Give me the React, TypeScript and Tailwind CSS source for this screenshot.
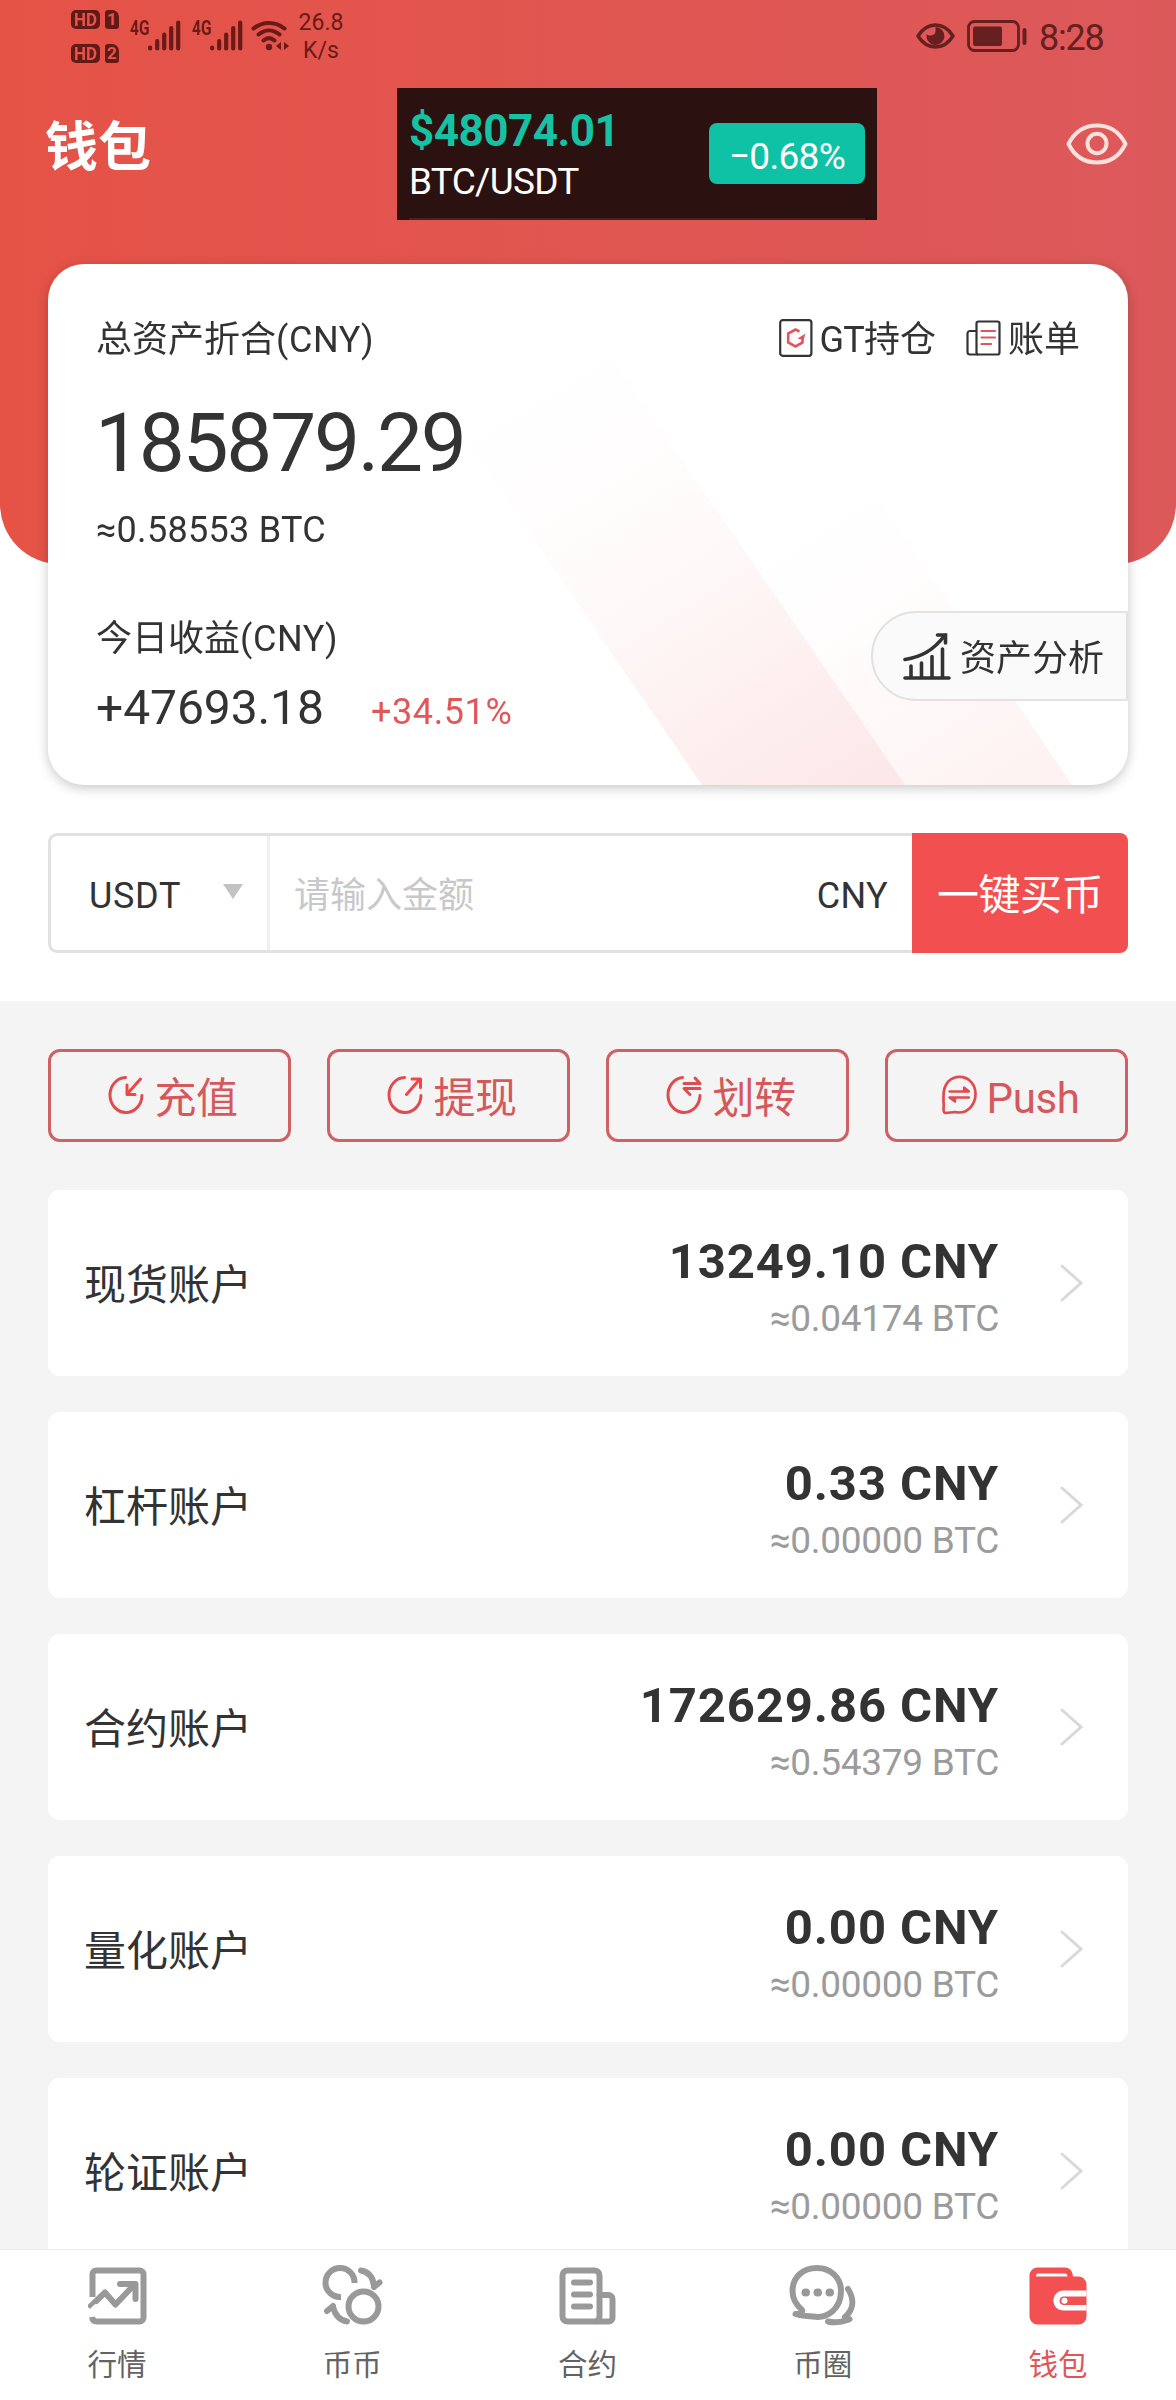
import type { ReactNode } from 'react';

type Account = { name: string; amount: string; btc: string };

const ACCOUNTS: Account[] = [
  { name: '现货账户', amount: '13249.10', btc: '0.04174' },
  { name: '杠杆账户', amount: '0.33', btc: '0.00000' },
  { name: '合约账户', amount: '172629.86', btc: '0.54379' },
  { name: '量化账户', amount: '0.00', btc: '0.00000' },
  { name: '轮证账户', amount: '0.00', btc: '0.00000' },
];

/* ---------- status bar ---------- */

const HdBadge = ({ sim }: { sim: string }) => (
  <div className="flex h-[19px] gap-[5px]">
    <span className="flex w-[29px] items-center justify-center rounded-[5px] bg-[#611a16] text-[17px] leading-none font-bold text-[#e55349]">
      <span className="scale-y-110">HD</span>
    </span>
    <span className="flex w-[14px] items-center justify-center rounded-[3px] rounded-tr-[7px] bg-[#611a16] text-[17px] leading-none font-bold text-[#e55349]">
      {sim}
    </span>
  </div>
);

const Signal = () => (
  <div className="flex h-[32px] w-[51px]">
    <span className="-mt-px h-[20px] w-[18px] origin-left scale-x-[0.78] text-[20px] leading-[18px] font-bold">4G</span>
    <svg width="33" height="32" viewBox="0 0 33 32" stroke="currentColor" strokeWidth="4.2" strokeLinecap="round">
      <path d="M2.1 27.5V28.5M9.2 21V28.5M16.2 14.5V28.5M23.2 8V28.5M30.2 2.5V28.5" />
    </svg>
  </div>
);

const Wifi = () => (
  <svg width="38" height="32" viewBox="0 0 38 32" fill="none" stroke="currentColor" strokeWidth="4" strokeLinecap="round">
    <path d="M2.5 8.5C11.5 1 24.5 1 33.5 8.5M7.5 14.5C14 9 22 9 28.5 14.5M12.5 20.5C16 17.5 20 17.5 23.5 20.5" />
    <circle cx="18" cy="27" r="3.2" fill="currentColor" stroke="none" />
    <path d="M25 26l5-4v8zM38 26l-5-4v8z" fill="currentColor" stroke="none" />
  </svg>
);

const StatusBar = () => (
  <div className="flex h-[72px] justify-between pr-[72px] pl-[71px] text-[#6a1a17]">
    <div className="flex">
      <div className="flex flex-col gap-[15px] pt-[10px]">
        <HdBadge sim="1" />
        <HdBadge sim="2" />
      </div>
      <div className="ml-[11px] flex gap-[11px] pt-[20px]">
        <Signal />
        <Signal />
      </div>
      <div className="ml-[8px] pt-[20px]">
        <Wifi />
      </div>
      <div className="ml-[8px] w-[48px] pt-[9px] text-center text-[23px] leading-[28px]">
        26.8
        <br />
        K/s
      </div>
    </div>
    <div className="flex pt-[20px] text-[#65201f]">
      <svg width="39" height="32" viewBox="0 0 39 32" fill="none" stroke="currentColor" strokeWidth="3.4">
        <path d="M2 16C7 8 13 5 19.5 5S32 8 37 16C32 24 26 27 19.5 27S7 24 2 16Z" strokeLinejoin="round" />
        <path d="M19.5 7a9 9 0 1 1-8.8 7c2 2.5 8 2 8.8-2z" fill="currentColor" stroke="none" />
      </svg>
      <svg className="ml-[12px]" width="60" height="32" viewBox="0 0 60 32" fill="none" stroke="currentColor">
        <rect x="1.5" y="1.5" width="50" height="29" rx="6" strokeWidth="2.8" />
        <rect x="6" y="6.5" width="29" height="19.5" rx="2" fill="currentColor" stroke="none" />
        <path d="M57.5 10V23" strokeWidth="4" strokeLinecap="round" />
      </svg>
      <span className="ml-[12px] w-[65px] text-[36px] leading-[37px] tracking-[-1.2px]">8:28</span>
    </div>
  </div>
);

/* ---------- header ---------- */

const TopBar = () => (
  <div className="mt-[16px] grid h-[132px] grid-cols-[349px_480px_1fr] px-[48px]">
    <h1 className="-ml-[3px] pt-[25px] text-[53px] leading-[70px] font-bold text-white">钱包</h1>
    <div className="flex flex-col bg-[#2b110f] px-[12px]">
      <div className="flex flex-1 justify-between">
        <div className="pt-[20px] whitespace-nowrap">
          <div className="text-[44px] leading-[46px] font-bold tracking-[-0.5px] text-[#16c2a3]">$48074.01</div>
          <div className="mt-[9px] text-[37px] leading-[38px] tracking-[-0.7px] text-white">BTC/USDT</div>
        </div>
        <div className="mt-[35px] flex h-[61px] w-[156px] items-center justify-center rounded-[8px] bg-[#10c2a5] pt-[6px] text-[37px] tracking-[-0.7px] text-white">
          −0.68%
        </div>
      </div>
      <div className="h-[2px] bg-[#49211f]" />
    </div>
    <div className="flex justify-end pt-[34px]">
      <svg width="62" height="44" viewBox="0 0 62 44" fill="none" stroke="#ffe1db" strokeWidth="4">
        <path d="M2.5 22C9 9 19 3.5 31 3.5S53 9 59.5 22C53 35 43 40.5 31 40.5S9 35 2.5 22Z" strokeLinejoin="round" />
        <ellipse cx="31" cy="21.5" rx="9.5" ry="9.8" />
      </svg>
    </div>
  </div>
);

/* ---------- asset card ---------- */

const GtIcon = () => (
  <svg className="-mt-[5px]" width="34" height="38" viewBox="0 0 34 38" fill="none" stroke="#333" strokeWidth="2.2">
    <rect x="1.2" y="1.2" width="31.2" height="35.6" rx="2.5" />
    <path d="M20.5 12.5L16.5 10.5L9.2 14.5V23.5L16.5 27.5L23.5 23.5V18" stroke="#e15759" strokeWidth="2.6" />
    <path d="M18.5 19.5L26.5 14.5L24.5 21Z" fill="#e15759" stroke="none" />
  </svg>
);

const BillIcon = () => (
  <svg className="-mt-[5px]" width="35" height="36" viewBox="0 0 35 36" fill="none" stroke="#333" strokeWidth="2.2">
    <rect x="10.5" y="1.5" width="23" height="33" rx="2" />
    <path d="M10.5 11H4a2.5 2.5 0 0 0-2.5 2.5V32A2.5 2.5 0 0 0 4 34.5H12" />
    <path d="M15.5 11H29M15.5 17.5H29M15.5 24H25" stroke="#e15759" strokeLinecap="round" />
  </svg>
);

const CardStripes = () => (
  <svg className="absolute inset-0" width="1080" height="521" viewBox="0 0 1080 521">
    <defs>
      <linearGradient id="stripeA" gradientUnits="userSpaceOnUse" x1="500" y1="110" x2="780" y2="560">
        <stop offset="0" stopColor="#f26464" stopOpacity="0" />
        <stop offset="0.35" stopColor="#f26464" stopOpacity="0.025" />
        <stop offset="1" stopColor="#f05c64" stopOpacity="0.15" />
      </linearGradient>
      <linearGradient id="stripeB" gradientUnits="userSpaceOnUse" x1="740" y1="270" x2="930" y2="560">
        <stop offset="0" stopColor="#f26464" stopOpacity="0" />
        <stop offset="0.35" stopColor="#f26464" stopOpacity="0.018" />
        <stop offset="1" stopColor="#f26464" stopOpacity="0.085" />
      </linearGradient>
    </defs>
    <path d="M654 521L297 0H500L857 521Z" fill="url(#stripeA)" />
    <path d="M857 521L500 0H674L1024 521Z" fill="url(#stripeB)" />
  </svg>
);

const AssetCard = () => (
  <section className="relative mx-[48px] -mt-[300px] h-[521px] overflow-hidden rounded-[36px] bg-white text-[36px] text-[#333]">
    <CardStripes />
    <div className="relative flex h-full flex-col pt-[52px] pl-[48px] leading-[48px]">
      <div className="flex justify-between pr-[48px]">
        <span>
          总资产折合<span className="tracking-[0.6px]">(CNY)</span>
        </span>
        <div className="flex items-center">
          <GtIcon />
          <span className="ml-[7px]">
            <span className="tracking-[-0.8px]">GT</span>持仓
          </span>
          <span className="ml-[30px] flex">
            <BillIcon />
          </span>
          <span className="ml-[7px]">账单</span>
        </div>
      </div>
      <div className="mt-[30px] -ml-px text-[82px] leading-[98px] tracking-[-2.3px]">185879.29</div>
      <div className="mt-[14px] tracking-[0.3px]">≈0.58553 BTC</div>
      <div className="mt-[61px] flex items-start justify-between">
        <div>
          <div>
            今日收益<span className="tracking-[0.6px]">(CNY)</span>
          </div>
          <div className="mt-[14px] flex items-baseline leading-[62px]">
            <span className="w-[275px] text-[48px] tracking-[-0.1px]">+47693.18</span>
            <span className="tracking-[0.6px] text-[#e15759]">+34.51%</span>
          </div>
        </div>
        <button className="-mt-[4px] flex h-[90px] w-[257px] items-center rounded-l-[45px] border-2 border-[#e2e2e2] bg-[#f9f9f9]/90 pl-[30px]">
          <svg width="48" height="48" viewBox="0 0 48 48" fill="none" stroke="#333" strokeWidth="3.6" strokeLinecap="round">
            <path d="M2 46H46M8 45V34M18.5 45V31M29 45V24.5M39.5 45V17" />
            <path d="M2 27.5C18 25 30 19 42 3M34.5 3H42.5V11" />
          </svg>
          <span className="ml-[9px] pt-[5px]">资产分析</span>
        </button>
      </div>
    </div>
  </section>
);

/* ---------- quick buy ---------- */

const QuickBuy = () => (
  <section className="mx-[48px] mt-[48px] mb-[48px] flex h-[120px] text-[36px] text-[#333]">
    <div className="flex flex-1 rounded-l-[9px] border-[3px] border-r-0 border-[#e1e1e1]">
      <div className="flex w-[219px] items-center justify-between border-r-[3px] border-[#efefef] pt-[5px] pr-[24px] pl-[38px]">
        <span className="tracking-[0.7px]">USDT</span>
        <svg className="-mt-[8px]" width="20" height="15" viewBox="0 0 20 15">
          <path d="M0 0H20L10 15Z" fill="#c3c3c3" />
        </svg>
      </div>
      <div className="flex flex-1 items-center justify-between pt-[5px] pr-[24px] pl-[24px]">
        <span className="text-[#c8c8cb]">请输入金额</span>
        <span className="tracking-[0.3px]">CNY</span>
      </div>
    </div>
    <button className="w-[216px] rounded-r-[8px] bg-[#f25050] pt-[4px] text-[42px] tracking-[-0.5px] text-white">一键买币</button>
  </section>
);

/* ---------- actions ---------- */

const Ring = ({ children }: { children: ReactNode }) => (
  <svg className="-mt-px" width="36" height="40" viewBox="0 0 36 40" fill="none" stroke="#e04b4f" strokeWidth="3" strokeLinecap="round" strokeLinejoin="round">
    {children}
  </svg>
);

const DepositIcon = () => (
  <Ring>
    <path d="M17.5 2.5A16 17.5 0 1 0 34 20.5" />
    <path d="M32.5 4L20 18M19 10V19.5H27" stroke="#f04648" />
  </Ring>
);

const WithdrawIcon = () => (
  <Ring>
    <path d="M17.5 2.5A16 17.5 0 1 0 34 20.5" />
    <path d="M19.5 19.5L32.5 4.5M25 4H33.5V12.5" stroke="#f04648" />
  </Ring>
);

const TransferIcon = () => (
  <Ring>
    <path d="M16.5 2.5A16 17.5 0 1 0 34 20.5" />
    <path d="M18 8.5H34L29 3M34 13.5H18L24 19.5" />
  </Ring>
);

const PushIcon = () => (
  <Ring>
    <path d="M2.5 21C2.5 9 9 1.8 18.5 1.8S34.5 9.5 34.5 19S28 37.5 18 37.5C12 36 8 38.5 4 37.8C1 37 3.5 32 2.5 27Z" strokeWidth="2.7" />
    <path d="M8.5 16.5H28L23 12.5V16M28 22.5H8.5L14 26.5V23" strokeWidth="2.3" />
  </Ring>
);

const ActionButton = ({ icon, label }: { icon: ReactNode; label: string }) => (
  <button className="flex h-[93px] items-center justify-center rounded-[12px] border-[3px] border-[#cd6163] pl-[7px] text-[42px] text-[#d5595c]">
    {icon}
    <span className="ml-[10px] pt-[5px] tracking-[-0.4px]">{label}</span>
  </button>
);

/* ---------- account list ---------- */

const AccountRow = ({ name, amount, btc }: Account) => (
  <div className="flex h-[186px] shrink-0 items-center rounded-[12px] bg-white pr-[45px] pl-[36px] text-[#333]">
    <span className="flex-1 pt-[5px] text-[42px]">{name}</span>
    <div className="pt-[13px] text-right">
      <div className="text-[49px] leading-[58px] font-bold tracking-[0.9px]">{amount} CNY</div>
      <div className="text-[37px] leading-[55px] tracking-[-0.3px] text-[#9b9b9b]">≈{btc} BTC</div>
    </div>
    <svg className="ml-[61px]" width="23" height="38" viewBox="0 0 23 38" fill="none" stroke="#d9d9d9" strokeWidth="3" strokeLinecap="round">
      <path d="M2 2L21 19L2 36" />
    </svg>
  </div>
);

/* ---------- bottom nav ---------- */

const NavItem = ({ label, active, children }: { label: string; active?: boolean; children: ReactNode }) => (
  <div className={active ? 'flex flex-1 flex-col items-center text-[#e15558]' : 'flex flex-1 flex-col items-center text-[#636363]'}>
    <svg width="68" height="64" viewBox="0 0 68 64" fill="none" stroke="#999" strokeWidth="6" strokeLinecap="round">
      {children}
    </svg>
    <span className="mt-[18px] -ml-px text-[29.5px] leading-[40px]">{label}</span>
  </div>
);

const BottomNav = () => (
  <nav className="flex h-[151px] border-t border-[#ececec] bg-white pt-[13px]">
    <NavItem label="行情">
      <path d="M8.5 34V12A4 4 0 0 1 12.5 7.5H55A4 4 0 0 1 59.5 12V54A4 4 0 0 1 55 58.5H12.5C10 58.5 8.5 57 8 54" strokeLinecap="butt" />
      <path d="M7 43L21 29.5L31.5 41.5L50 22M36 21H51.5V36" strokeLinejoin="round" />
      <path d="M4 51L12 43" stroke="#fff" strokeWidth="4" />
    </NavItem>
    <NavItem label="币币">
      <circle cx="44.5" cy="43.5" r="15" />
      <path d="M22 34A14.5 14.5 0 1 1 35.5 20" strokeLinecap="butt" />
      <path d="M42 7.5C50 9 54 14 55 23M55 24L60.5 19.5" />
      <path d="M28 58.5C20 57 16 52 14 44M14 43L8 48" />
    </NavItem>
    <NavItem label="合约">
      <rect x="8.5" y="7.5" width="37" height="51" rx="5" />
      <path d="M45.5 32H54A4 4 0 0 1 58.5 36V54A4 4 0 0 1 54 58.5H42" />
      <path d="M20 19.5H36M20 31.5H36M20 43.5H36" />
    </NavItem>
    <NavItem label="币圈">
      <path d="M13 47C5 40 3.5 33 3.5 28C3.5 14 14 5 28 5S52 15 52 28C52 46 38 56 24 53.5C17 53 12 53 6.5 51C11 51.5 14 50 13 47Z" strokeLinejoin="round" />
      <path d="M59 26C66 37 64 47 56 54C59 56.5 62 55.5 60 56.5C53 59 46 60.5 39 58.5" strokeLinejoin="round" />
      <path d="M16.5 29.5H17M28.5 29.5H29M40.5 29.5H41" strokeWidth="8" />
    </NavItem>
    <NavItem label="钱包" active>
      <g stroke="none">
        <path d="M5.5 13A8 8 0 0 1 13 4.5H41C46 4.5 48.5 8 49 13.5H54A8 8 0 0 1 62.5 21V53A8 8 0 0 1 54 61.5H13A8 8 0 0 1 5.5 53Z" fill="#f35151" />
        <path d="M12 13.5C12 11 13 10.5 15 10.5H39C42 10.5 43.5 11 43.5 13.5Z" fill="#fff" />
        <path d="M62.5 27.5H40C26 27.5 26 47.5 40 47.5H62.5V42H40C34 42 34 33.5 40 33.5H62.5Z" fill="#fff" />
        <circle cx="40.5" cy="37.8" r="3" fill="#fff" />
      </g>
    </NavItem>
  </nav>
);

export default function App() {
  return (
    <div
      className="flex h-[2400px] w-[1176px] flex-col overflow-hidden bg-white"
      style={{ fontFamily: 'Roboto, "Noto Sans CJK SC", sans-serif' }}
    >
      <header className="h-[564px] shrink-0 rounded-b-[60px] bg-linear-to-r from-[#e65246] to-[#dc595b]">
        <StatusBar />
        <TopBar />
      </header>
      <div className="shrink-0 drop-shadow-[0_3px_6px_rgba(0,0,0,0.22)]">
        <AssetCard />
      </div>
      <QuickBuy />
      <main className="flex min-h-0 flex-1 flex-col gap-[36px] overflow-hidden bg-[#f4f4f4] px-[48px] pt-[48px]">
        <div className="mb-[12px] grid grid-cols-4 gap-[36px]">
          <ActionButton icon={<DepositIcon />} label="充值" />
          <ActionButton icon={<WithdrawIcon />} label="提现" />
          <ActionButton icon={<TransferIcon />} label="划转" />
          <ActionButton icon={<PushIcon />} label="Push" />
        </div>
        {ACCOUNTS.map((account) => (
          <AccountRow key={account.name} {...account} />
        ))}
      </main>
      <BottomNav />
    </div>
  );
}
